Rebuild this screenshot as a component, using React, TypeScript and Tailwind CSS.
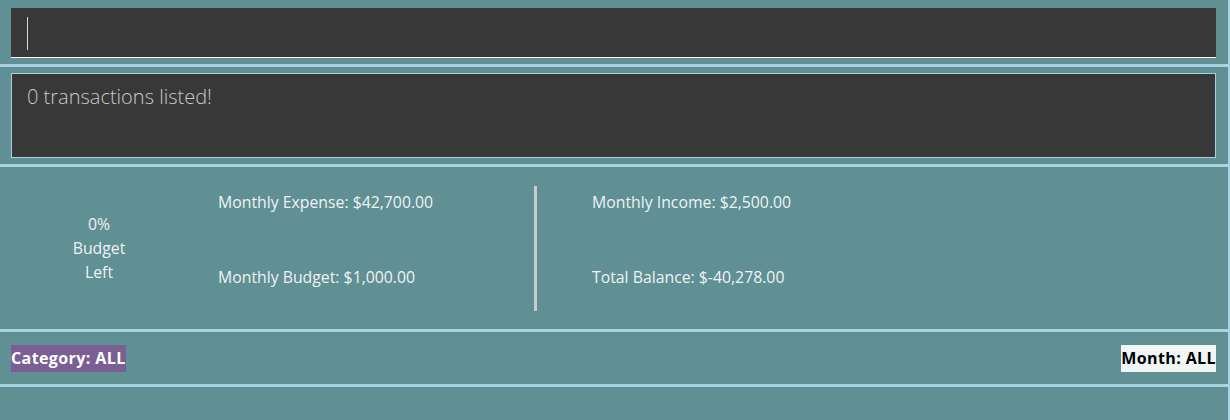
import React from 'react'

const font = { fontFamily: '"Open Sans", "Noto Sans", sans-serif' }

function Separator() {
  return <div className="h-[3px] bg-[#a9d3e3]" />
}

export default function App() {
  return (
    <div className="w-[1230px] h-[420px] bg-[#608f94] border-r-2 border-[#a9d3e3] overflow-hidden" style={font}>
      {/* Command box */}
      <div className="h-[64px] pt-[8px] pl-[11px] pr-[12px]">
        <div className="h-[50px] bg-[#383838] border-b border-white pl-[16px] pt-[9px]">
          <div className="w-px h-[33px] bg-[#d8d8d8]" />
        </div>
      </div>
      <Separator />

      {/* Result display */}
      <div className="h-[97px] pt-[6px] pl-[11px] pr-[12px]">
        <div className="h-[85px] bg-[#383838] border border-[#a3d2e0] pl-[15px] pt-[8px]">
          <span className="text-[20px] font-light text-[#c9c9c9]">0 transactions listed!</span>
        </div>
      </div>
      <Separator />

      {/* Budget stats */}
      <div className="h-[162px] flex items-center text-[15.8px] text-[#eef4f4]">
        <div className="w-[198px] flex flex-col items-center leading-[24px]">
          <span>0%</span>
          <span>Budget</span>
          <span>Left</span>
        </div>
        <div className="ml-[20px] w-[316px] h-[125px] flex flex-col pt-[6px] gap-[55px] leading-[20px]">
          <span>Monthly Expense: $42,700.00</span>
          <span>Monthly Budget: $1,000.00</span>
        </div>
        <div className="w-[3px] h-[125px] bg-[#c9cccc]" />
        <div className="ml-[55px] h-[125px] flex flex-col pt-[6px] gap-[55px] leading-[20px]">
          <span>Monthly Income: $2,500.00</span>
          <span>Total Balance: $-40,278.00</span>
        </div>
      </div>
      <Separator />

      {/* Filters */}
      <div className="h-[52px] pl-[11px] pr-[12px] pt-[13px] flex justify-between items-start text-[16px] font-bold tracking-[0.4px]">
        <span className="h-[27px] leading-[27px] bg-[#7a5f94] text-white">Category: ALL</span>
        <span className="h-[27px] leading-[27px] bg-[#f0f5f5] text-black">Month: ALL</span>
      </div>
      <Separator />
    </div>
  )
}
